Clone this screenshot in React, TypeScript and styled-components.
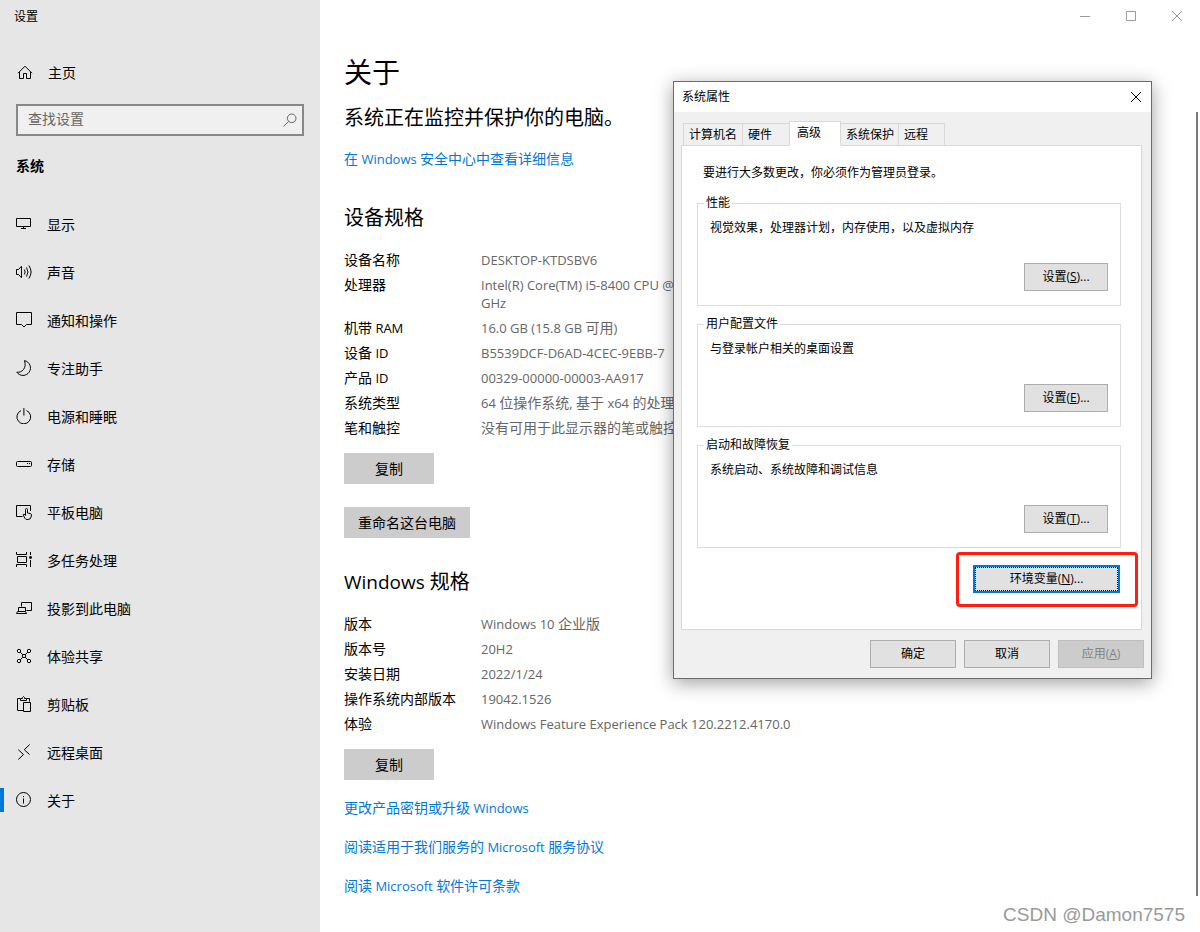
import React from "react";
import styled, { createGlobalStyle, css } from "styled-components";

const GlobalStyle = createGlobalStyle`
  * { box-sizing: border-box; }
  body {
    margin: 0;
    background: #fff;
    color: #000;
    font-family: "Open Sans", "Noto Sans CJK SC", sans-serif;
    font-size: 14px;
    line-height: 18px;
  }
  button, input { font: inherit; color: inherit; }
`;

/* ---------- text ---------- */

const Latin = styled.span<{ $size: number }>`
  font-size: ${(p) => p.$size}px;
`;

/* Latin runs are set one pixel smaller than the Chinese text round them. */
function Mixed({ text, size = 13 }: { text: string; size?: number }) {
  const parts = text.split(/([\n\u0020-\u007e]+)/).filter(Boolean);
  return (
    <>
      {parts.map((part, i) =>
        /^[\n\u0020-\u007e]+$/.test(part) ? (
          <Latin key={i} $size={size}>
            {part}
          </Latin>
        ) : (
          part
        )
      )}
    </>
  );
}

/* ---------- icons ---------- */

const Svg = styled.svg`
  display: block;
  flex: none;
  fill: none;
  stroke: currentColor;
  stroke-width: 1;
`;

function Icon({ size = 16, children }: { size?: number; children: React.ReactNode }) {
  return (
    <Svg width={size} height={size} viewBox={`0 0 ${size} ${size}`} aria-hidden="true">
      {children}
    </Svg>
  );
}

const icons = {
  home: (
    <>
      <path d="M1 9.2 8 2.2l7 7" />
      <path d="M2.5 8v6.5h4v-5h3v5h4V8" />
    </>
  ),
  display: <path d="M.5 2.5h14v8H.5zM7.5 10.5v2M5 12.5h5" />,
  sound: (
    <>
      <path d="M.5 5.5h2L5.5 2.3v11.4l-3-3.2h-2z" />
      <path d="M8.3 5.5q1.8 2.5 0 5M10.5 3.5q3 4.5 0 9M12.8 1.5q4.6 6.5 0 13" />
    </>
  ),
  message: <path d="M.5.5h15v12h-5L8 15l-2.500-2.500h-5z" />,
  moon: <path d="M8.500.6A7.500 7.500 0 1 1 .8 12.200C6 13 11 8 8.500.6z" />,
  power: <path d="M7.900 0v7.500M5 2.600A6.900 6.900 0 1 0 10.600 2.600" />,
  storage: (
    <>
      <rect x=".5" y="5.500" width="15" height="5" rx="1" />
      <path d="M11 7.500h1M13 7.500h1" />
    </>
  ),
  tablet: (
    <>
      <path d="M6.500 12.500h-6v-11h14V7" />
      <path d="M9.500 11.500v-6a1 1 0 0 1 2 0V9l3 .6q1 .3.9 1.400l-.3 2q-.5 2.500-3 2.500h-1q-1.500 0-2.300-1.300l-1.600-3.100q-.2-1 .8-.9z" />
    </>
  ),
  multitask: (
    <>
      <path d="M.5 0v2.500h10V0M1.500 4.500h9v6h-9zM.5 15v-2.500h10V15M14.500 0v3M14.500 8v7" />
      <circle cx="14.500" cy="5.500" r="1.400" fill="currentColor" stroke="none" />
    </>
  ),
  project: (
    <>
      <path d="M5.500 6.500v-4h10v8h-5" />
      <path d="M2.500 11.500v-4h7v4M1.500 11.500h8l1 2H.5z" />
    </>
  ),
  share: (
    <>
      <circle cx="3" cy="3" r="1.700" />
      <circle cx="13" cy="3" r="1.700" />
      <circle cx="3" cy="13" r="1.700" />
      <circle cx="13" cy="13" r="1.700" />
      <circle cx="8" cy="8" r="1.700" />
      <path d="M4.200 4.200l2.600 2.600M11.800 4.200 9.200 6.800M4.200 11.800l2.600-2.600M11.800 11.800 9.200 9.200" />
    </>
  ),
  clipboard: (
    <>
      <path d="M4 2.500H1.500v12h6M11 2.500h2.500v3" />
      <path d="M4.500 4.500v-2h2v-1l1-1 1 1v1h2v2zM7.500 6.500h7v9h-7z" />
    </>
  ),
  remote: <path d="M2.300 5.700 7.500 10.500l-5.200 5M13.700.5 8.300 5.700l5.200 4.800" />,
  info: (
    <>
      <circle cx="7.500" cy="7.500" r="7" />
      <path d="M7.500 6.500v5M7.500 4v1.200" />
    </>
  ),
};

type IconName = keyof typeof icons;

/* ---------- settings window ---------- */

const Desktop = styled.div`
  position: relative;
  display: flex;
  min-height: 100vh;
  overflow: hidden;
`;

const Sidebar = styled.aside`
  flex: none;
  width: 320px;
  background: #e6e6e6;
`;

const AppTitle = styled.div`
  height: 32px;
  padding: 0 14px;
  font-size: 12px;
  line-height: 34px;
`;

const NavLink = styled.a<{ $current?: boolean }>`
  display: flex;
  align-items: center;
  gap: 15px;
  height: 48px;
  padding: 0 16px;
  color: #000;
  text-decoration: none;
  ${(p) =>
    p.$current &&
    css`
      padding-left: 13px;
      &::before {
        content: "";
        width: 4px;
        height: 24px;
        margin: 0 -3px 0 -13px;
        background: #0078d7;
      }
    `}
`;

const NavLabel = styled.span`
  padding-top: 2px;
`;

const HomeRow = styled.div`
  margin: 16px 0 8px 1px;
`;

const SearchBox = styled.div`
  display: flex;
  align-items: center;
  height: 32px;
  margin: 0 16px;
  padding: 0 5px 0 10px;
  border: 2px solid #888;
  background: #f0f0f0;
  color: #666;
`;

const SearchInput = styled.input`
  flex: 1;
  min-width: 0;
  padding: 0 0 2px;
  border: 0;
  outline: 0;
  background: transparent;
  &::placeholder { color: #666; opacity: 1; }
`;

const SectionName = styled.h2`
  margin: 20px 16px 24px;
  font-size: 14px;
  line-height: 20px;
  font-weight: 700;
`;

const Main = styled.main`
  flex: 1;
  min-width: 0;
  padding-bottom: 36px;
`;

const WindowControls = styled.div`
  display: flex;
  justify-content: flex-end;
  height: 32px;
`;

const ControlButton = styled.button`
  display: flex;
  align-items: center;
  justify-content: center;
  width: 46px;
  height: 32px;
  padding: 0;
  border: 0;
  background: transparent;
  color: #999;
`;

const Content = styled.div`
  display: flex;
  flex-direction: column;
  align-items: flex-start;
  padding: 20px 24px 0;
`;

const PageTitle = styled.h1`
  margin: 0;
  font-size: 28px;
  line-height: 40px;
  font-weight: 400;
`;

const Status = styled.p`
  margin: 12px 0 17px;
  font-size: 20px;
  line-height: 28px;
`;

const Heading = styled.h2`
  margin: 35px 0 19px;
  font-size: 20px;
  line-height: 28px;
  font-weight: 400;
`;

const TextLink = styled.a`
  color: #0078d7;
  line-height: 20px;
  text-decoration: none;
`;

const Specs = styled.dl`
  display: flex;
  flex-direction: column;
  gap: 7px;
  margin: 0 0 16px;
`;

const SpecRow = styled.div`
  display: flex;
`;

const Term = styled.dt`
  width: 137px;
`;

const Value = styled.dd`
  margin: 0;
  color: #666;
  white-space: pre-line;
`;

const FlatButton = styled.button`
  min-width: 90px;
  height: 31px;
  padding: 0 14px;
  border: 0;
  background: #ccc;
`;

const RenameRow = styled.div`
  margin: 23px 0 -5px;
`;

const LinkList = styled.div`
  display: flex;
  flex-direction: column;
  align-items: flex-start;
  gap: 19px;
  margin-top: 18px;
`;

const ScrollThumb = styled.div`
  position: absolute;
  top: 112px;
  right: 2px;
  bottom: 36px;
  width: 2px;
  background: #7a7a7a;
`;

const Watermark = styled.div`
  position: absolute;
  right: 15px;
  bottom: 4px;
  color: #999;
  font-family: "Liberation Sans", sans-serif;
  font-size: 19px;
  line-height: 26px;
  text-shadow: -1px -1px 0 #fff;
`;

/* ---------- system properties dialog ---------- */

const Dialog = styled.section`
  position: absolute;
  left: 673px;
  top: 81px;
  width: 479px;
  border: 1px solid #6b6b6b;
  background: #f0f0f0;
  box-shadow: 0 4px 18px rgba(0, 0, 0, 0.38);
  font-size: 12px;
  line-height: 16px;
`;

const TitleBar = styled.header`
  display: flex;
  align-items: center;
  justify-content: space-between;
  height: 30px;
  padding-left: 8px;
  background: #fff;
`;

const CloseButton = styled(ControlButton)`
  width: 30px;
  height: 30px;
  color: #000;
`;

const Tabs = styled.div`
  display: flex;
  align-items: flex-end;
  height: 34px;
  padding-left: 9px;
`;

const Tab = styled.button<{ $width: number; $active?: boolean }>`
  width: ${(p) => p.$width}px;
  height: 23px;
  padding: 0 0 0 5px;
  border: 1px solid #d9d9d9;
  border-left-width: 0;
  background: #f0f0f0;
  text-align: left;
  white-space: nowrap;
  &:first-child { border-left-width: 1px; }
  ${(p) =>
    p.$active &&
    css`
      z-index: 1;
      height: 25px;
      margin-left: -1px;
      padding: 0 0 2px 7px;
      border-left-width: 1px;
      border-bottom-color: #fff;
      background: #fff;
    `}
`;

const Panel = styled.div`
  margin: -1px 9px 0 7px;
  padding: 19px 20px 22px 15px;
  border: 1px solid #d9d9d9;
  background: #fff;
`;

const Notice = styled.p`
  margin: 0 0 14px 6px;
`;

const Group = styled.fieldset`
  display: block;
  min-width: 0;
  margin: 0 0 10px;
  padding: 9px 12px 14px;
  border: 1px solid #dcdcdc;
`;

const Legend = styled.legend`
  margin-left: -6px;
  padding: 0 2px;
`;

const GroupText = styled.p`
  margin: 0 0 27px;
`;

const Actions = styled.div`
  display: flex;
  justify-content: flex-end;
`;

const DialogButton = styled.button<{ $width: number }>`
  width: ${(p) => p.$width}px;
  height: 28px;
  padding: 0;
  border: 1px solid #adadad;
  background: #e1e1e1;
  &:disabled {
    border-color: #bfbfbf;
    background: #ccc;
    color: #838383;
  }
`;

const DefaultButton = styled(DialogButton)`
  border: 2px solid #0078d7;
  outline: 1px dotted #000;
  outline-offset: -3px;
`;

const Highlight = styled.div`
  width: 182px;
  margin: -6px -17px 0 auto;
  padding: 10px 15px 11px 14px;
  border: 3px solid #ff1e12;
  border-radius: 4px;
`;

const Footer = styled.footer`
  display: flex;
  justify-content: flex-end;
  gap: 8px;
  padding: 10px 7px;
`;

function KeyLabel({ text, letter, dots = true }: { text: string; letter: string; dots?: boolean }) {
  return (
    <>
      {text}(<u>{letter}</u>){dots && "..."}
    </>
  );
}

/* ---------- data ---------- */

const navItems: [IconName, string][] = [
  ["display", "显示"],
  ["sound", "声音"],
  ["message", "通知和操作"],
  ["moon", "专注助手"],
  ["power", "电源和睡眠"],
  ["storage", "存储"],
  ["tablet", "平板电脑"],
  ["multitask", "多任务处理"],
  ["project", "投影到此电脑"],
  ["share", "体验共享"],
  ["clipboard", "剪贴板"],
  ["remote", "远程桌面"],
  ["info", "关于"],
];

const deviceSpecs: [string, string][] = [
  ["设备名称", "DESKTOP-KTDSBV6"],
  ["处理器", "Intel(R) Core(TM) i5-8400 CPU @ 2.80GHz 2.81\nGHz"],
  ["机带 RAM", "16.0 GB (15.8 GB 可用)"],
  ["设备 ID", "B5539DCF-D6AD-4CEC-9EBB-7"],
  ["产品 ID", "00329-00000-00003-AA917"],
  ["系统类型", "64 位操作系统, 基于 x64 的处理器"],
  ["笔和触控", "没有可用于此显示器的笔或触控输入"],
];

const windowsSpecs: [string, string][] = [
  ["版本", "Windows 10 企业版"],
  ["版本号", "20H2"],
  ["安装日期", "2022/1/24"],
  ["操作系统内部版本", "19042.1526"],
  ["体验", "Windows Feature Experience Pack 120.2212.4170.0"],
];

const links = ["更改产品密钥或升级 Windows", "阅读适用于我们服务的 Microsoft 服务协议", "阅读 Microsoft 软件许可条款"];

const tabs = [
  { label: "计算机名", width: 60 },
  { label: "硬件", width: 47 },
  { label: "高级", width: 52, active: true },
  { label: "系统保护", width: 58 },
  { label: "远程", width: 46 },
];

const groups = [
  { title: "性能", text: "视觉效果，处理器计划，内存使用，以及虚拟内存", key: "S" },
  { title: "用户配置文件", text: "与登录帐户相关的桌面设置", key: "E" },
  { title: "启动和故障恢复", text: "系统启动、系统故障和调试信息", key: "T" },
];

function SpecList({ rows }: { rows: [string, string][] }) {
  return (
    <Specs>
      {rows.map(([term, value]) => (
        <SpecRow key={term}>
          <Term>
            <Mixed text={term} />
          </Term>
          <Value>
            <Mixed text={value} />
          </Value>
        </SpecRow>
      ))}
    </Specs>
  );
}

function SystemProperties() {
  return (
    <Dialog role="dialog" aria-label="系统属性">
      <TitleBar>
        系统属性
        <CloseButton aria-label="关闭">
          <Icon size={12}>
            <path d="M1 1l10 10M11 1 1 11" />
          </Icon>
        </CloseButton>
      </TitleBar>
      <Tabs role="tablist">
        {tabs.map((t) => (
          <Tab key={t.label} role="tab" aria-selected={!!t.active} $width={t.width} $active={t.active}>
            {t.label}
          </Tab>
        ))}
      </Tabs>
      <Panel role="tabpanel">
        <Notice>要进行大多数更改，你必须作为管理员登录。</Notice>
        {groups.map((g) => (
          <Group key={g.key}>
            <Legend>{g.title}</Legend>
            <GroupText>{g.text}</GroupText>
            <Actions>
              <DialogButton $width={84}>
                <KeyLabel text="设置" letter={g.key} />
              </DialogButton>
            </Actions>
          </Group>
        ))}
        <Highlight>
          <DefaultButton $width={147}>
            <KeyLabel text="环境变量" letter="N" />
          </DefaultButton>
        </Highlight>
      </Panel>
      <Footer>
        <DialogButton $width={86}>确定</DialogButton>
        <DialogButton $width={86}>取消</DialogButton>
        <DialogButton $width={86} disabled>
          <KeyLabel text="应用" letter="A" dots={false} />
        </DialogButton>
      </Footer>
    </Dialog>
  );
}

export default function App() {
  return (
    <>
      <GlobalStyle />
      <Desktop>
        <Sidebar>
          <AppTitle>设置</AppTitle>
          <HomeRow>
            <NavLink href="#home">
              <Icon>{icons.home}</Icon>
              <NavLabel>主页</NavLabel>
            </NavLink>
          </HomeRow>
          <SearchBox>
            <SearchInput type="text" placeholder="查找设置" aria-label="查找设置" />
            <Icon size={14}>
              <circle cx="8.700" cy="5.300" r="4.300" />
              <path d="M5.600 8.400.5 13.500" />
            </Icon>
          </SearchBox>
          <SectionName>系统</SectionName>
          <nav>
            {navItems.map(([icon, label]) => (
              <NavLink key={icon} href={`#${icon}`} $current={icon === "info"}>
                <Icon>{icons[icon]}</Icon>
                <NavLabel>{label}</NavLabel>
              </NavLink>
            ))}
          </nav>
        </Sidebar>
        <Main>
          <WindowControls>
            <ControlButton aria-label="最小化">
              <Icon size={10}>
                <path d="M0 5.500h10" />
              </Icon>
            </ControlButton>
            <ControlButton aria-label="最大化">
              <Icon size={10}>
                <path d="M.5.5h9v9h-9z" />
              </Icon>
            </ControlButton>
            <ControlButton aria-label="关闭">
              <Icon size={10}>
                <path d="M0 0l10 10M10 0 0 10" />
              </Icon>
            </ControlButton>
          </WindowControls>
          <Content>
            <PageTitle>关于</PageTitle>
            <Status>系统正在监控并保护你的电脑。</Status>
            <TextLink href="#security">
              <Mixed text="在 Windows 安全中心中查看详细信息" />
            </TextLink>
            <Heading>设备规格</Heading>
            <SpecList rows={deviceSpecs} />
            <FlatButton>复制</FlatButton>
            <RenameRow>
              <FlatButton>重命名这台电脑</FlatButton>
            </RenameRow>
            <Heading>
              <Mixed text="Windows 规格" size={19} />
            </Heading>
            <SpecList rows={windowsSpecs} />
            <FlatButton>复制</FlatButton>
            <LinkList>
              {links.map((text) => (
                <TextLink key={text} href="#more">
                  <Mixed text={text} />
                </TextLink>
              ))}
            </LinkList>
          </Content>
        </Main>
        <ScrollThumb />
        <SystemProperties />
        <Watermark>CSDN @Damon7575</Watermark>
      </Desktop>
    </>
  );
}
